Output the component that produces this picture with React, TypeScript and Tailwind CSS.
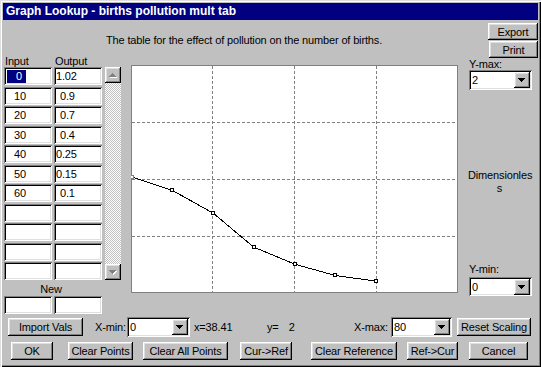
import React from 'react';

const raised =
  'shadow-[inset_-1px_-1px_#000,inset_1px_1px_#fff,inset_-2px_-2px_#808080,inset_2px_2px_#dfdfdf]';
const sunken =
  'shadow-[inset_1px_1px_#808080,inset_-1px_-1px_#fff,inset_2px_2px_#000,inset_-2px_-2px_#dfdfdf]';

function Btn({ className, children }: { className: string; children: React.ReactNode }) {
  return (
    <div
      className={`${raised} bg-[#c0c0c0] flex items-center justify-center whitespace-nowrap leading-[12px] ${className}`}
    >
      {children}
    </div>
  );
}

function DownArrow() {
  return (
    <svg width="16" height="16" viewBox="0 0 16 16" shapeRendering="crispEdges">
      <rect x="4" y="6" width="7" height="1" fill="#000" />
      <rect x="5" y="7" width="5" height="1" fill="#000" />
      <rect x="6" y="8" width="3" height="1" fill="#000" />
      <rect x="7" y="9" width="1" height="1" fill="#000" />
    </svg>
  );
}

function ScrollArrow({ up }: { up: boolean }) {
  const rows = up
    ? [
        [7, 6, 1],
        [6, 7, 3],
        [5, 8, 5],
        [4, 9, 7],
      ]
    : [
        [4, 6, 7],
        [5, 7, 5],
        [6, 8, 3],
        [7, 9, 1],
      ];
  return (
    <svg width="16" height="16" viewBox="0 0 16 16" shapeRendering="crispEdges">
      {rows.map(([x, y, w], i) => (
        <rect key={'s' + i} x={x + 1} y={y + 1} width={w} height="1" fill="#fff" />
      ))}
      {rows.map(([x, y, w], i) => (
        <rect key={'r' + i} x={x} y={y} width={w} height="1" fill="#808080" />
      ))}
    </svg>
  );
}

function Combo({ value, className }: { value: string; className: string }) {
  return (
    <div className={`${sunken} bg-white flex items-center ${className}`}>
      <span className="flex-1 pl-[3px] leading-[12px]">{value}</span>
      <div className={`${raised} bg-[#c0c0c0] w-[16px] h-[16px] mr-[2px]`}>
        <DownArrow />
      </div>
    </div>
  );
}

const rows: { i: string; o: string; op: boolean; sel?: boolean }[] = [
  { i: '0', o: '1.02', op: false, sel: true },
  { i: '10', o: '0.9', op: true },
  { i: '20', o: '0.7', op: true },
  { i: '30', o: '0.4', op: true },
  { i: '40', o: '0.25', op: false },
  { i: '50', o: '0.15', op: false },
  { i: '60', o: '0.1', op: true },
  { i: '', o: '', op: false },
  { i: '', o: '', op: false },
  { i: '', o: '', op: false },
  { i: '', o: '', op: false },
];

const pts = [
  [0, 1.02],
  [10, 0.9],
  [20, 0.7],
  [30, 0.4],
  [40, 0.25],
  [50, 0.15],
  [60, 0.1],
];

function Plot() {
  const X = (x: number) => (x / 80) * 326 + 0.5;
  const Y = (y: number) => 227 - (y / 2) * 227 + 0.5;
  return (
    <svg width="327" height="228" viewBox="0 0 327 228" className="block">
      <rect x="0.5" y="0.5" width="326" height="227" fill="#fff" stroke="#808080" strokeWidth="1" />
      {[81.5, 163.5, 245.5].map((x) => (
        <line key={'v' + x} x1={x} y1="1" x2={x} y2="227" stroke="#808080" strokeDasharray="3 2" />
      ))}
      {[57.5, 114.5, 171.5].map((y) => (
        <line key={'h' + y} x1="1" y1={y} x2="326" y2={y} stroke="#808080" strokeDasharray="3 2" />
      ))}
      <polyline
        points={pts.map(([x, y]) => `${X(x)},${Y(y)}`).join(' ')}
        fill="none"
        stroke="#000"
        strokeWidth="1"
        shapeRendering="crispEdges"
      />
      {pts.map(([x, y], i) => (
        <rect
          key={i}
          x={Math.round(X(x)) - 2 + 0.5}
          y={Math.round(Y(y)) - 2 + 0.5}
          width="3"
          height="3"
          fill="#fff"
          stroke={i === 0 ? '#808080' : '#000'}
          strokeWidth="1"
          shapeRendering="crispEdges"
        />
      ))}
    </svg>
  );
}

export default function App() {
  return (
    <div
      className={`w-[541px] h-[367px] bg-[#c0c0c0] p-[3px] flex flex-col text-[11px] tracking-[-0.15px] text-black font-['Liberation_Sans',Arial,sans-serif] shadow-[inset_1px_1px_#dfdfdf,inset_2px_2px_#fff,inset_-1px_-1px_#000,inset_-2px_-2px_#808080]`}
    >
      <div className="h-[17px] bg-[#000080] text-white font-bold text-[12px] leading-[17px] pl-[3px] tracking-normal whitespace-nowrap">
        Graph Lookup - births pollution mult tab
      </div>

      <div className="flex">
        <div className="w-[465px] flex flex-col">
          <div className="h-[35px] pt-[14px] leading-[13px] pl-[103px] whitespace-nowrap">
            The table for the effect of pollution on the number of births.
          </div>
          <div className="flex">
            <div className="w-[118px] flex flex-col">
              <div className="h-[12px] leading-[12px] flex">
                <span className="ml-[2px] w-[50px]">Input</span>
                <span>Output</span>
              </div>
              <div className="flex">
                <div className="ml-[1px] grid grid-cols-[48px_48px] auto-rows-[18px] gap-x-[2px] gap-y-[1.5px]">
                  {rows.map((r, idx) => (
                    <React.Fragment key={idx}>
                      <div className={`${sunken} bg-white flex items-center leading-[12px]`}>
                        {r.sel ? (
                          <span className="ml-[3px] bg-[#000080] text-white pl-[9px] pr-[4px] leading-[13px]">
                            {r.i}
                          </span>
                        ) : (
                          <span className="pl-[10px]">{r.i}</span>
                        )}
                      </div>
                      <div className={`${sunken} bg-white flex items-center leading-[12px]`}>
                        <span className={r.op ? 'pl-[6px]' : 'pl-[2px]'}>{r.o}</span>
                      </div>
                    </React.Fragment>
                  ))}
                </div>
                <div className="ml-[3px] w-[16px] flex flex-col bg-[image:conic-gradient(#fff_25%,#c0c0c0_0_50%,#fff_0_75%,#c0c0c0_0)] bg-[length:2px_2px]">
                  <div className={`${raised} bg-[#c0c0c0] h-[16px]`}>
                    <ScrollArrow up={true} />
                  </div>
                  <div className="flex-1" />
                  <div className={`${raised} bg-[#c0c0c0] h-[16px]`}>
                    <ScrollArrow up={false} />
                  </div>
                </div>
              </div>
              <div className="h-[16px] pt-[3px] leading-[12px] ml-[1px] w-[98px] pr-[4px] text-center">New</div>
              <div className="ml-[1px] flex gap-[2px]">
                <div className={`${sunken} bg-white w-[48px] h-[18px]`} />
                <div className={`${sunken} bg-white w-[48px] h-[18px]`} />
              </div>
            </div>
            <div className="ml-[10px] mt-[10px]">
              <Plot />
            </div>
          </div>
        </div>

        <div className="w-[70px] flex flex-col">
          <Btn className="mt-[3px] self-end w-[50px] h-[17px]">Export</Btn>
          <Btn className="mt-[1px] self-end w-[49px] h-[17px]">Print</Btn>
          <div className="h-[12px] leading-[12px] pl-[1px]">Y-max:</div>
          <Combo value="2" className="ml-[1px] w-[63px] h-[20px]" />
          <div className="mt-[79px] w-[63px] leading-[13px] text-center whitespace-nowrap">
            Dimensionles
            <br />s
          </div>
          <div className="mt-[68px] h-[12px] leading-[12px] pl-[1px]">Y-min:</div>
          <Combo value="0" className="mt-[2px] ml-[1px] w-[63px] h-[19px]" />
        </div>
      </div>

      <div className="mt-[3px] h-[20px] flex items-center whitespace-nowrap">
        <Btn className="ml-[5px] w-[75px] h-[18px]">Import Vals</Btn>
        <div className="w-[44px] text-right pr-[1px] leading-[12px]">X-min:</div>
        <Combo value="0" className="w-[63px] h-[20px]" />
        <div className="w-[76px] pl-[4px] leading-[12px]">x=38.41</div>
        <div className="w-[60px] pl-[1px] leading-[12px] flex">
          <span>y=</span>
          <span className="ml-[10px]">2</span>
        </div>
        <div className="w-[65px] text-right pr-[3px] leading-[12px]">X-max:</div>
        <Combo value="80" className="w-[61px] h-[20px]" />
        <Btn className="ml-[5px] w-[74px] h-[18px]">Reset Scaling</Btn>
      </div>

      <div className="mt-[5px] h-[18px] flex">
        <Btn className="ml-[8px] w-[42px] h-[18px]">OK</Btn>
        <Btn className="ml-[15px] w-[65px] h-[18px]">Clear Points</Btn>
        <Btn className="ml-[10px] w-[85px] h-[18px]">Clear All Points</Btn>
        <Btn className="ml-[12px] w-[52px] h-[18px]">Cur-&gt;Ref</Btn>
        <Btn className="ml-[19px] w-[86px] h-[18px]">Clear Reference</Btn>
        <Btn className="ml-[10px] w-[51px] h-[18px]">Ref-&gt;Cur</Btn>
        <Btn className="ml-[11px] w-[59px] h-[18px]">Cancel</Btn>
      </div>
    </div>
  );
}
